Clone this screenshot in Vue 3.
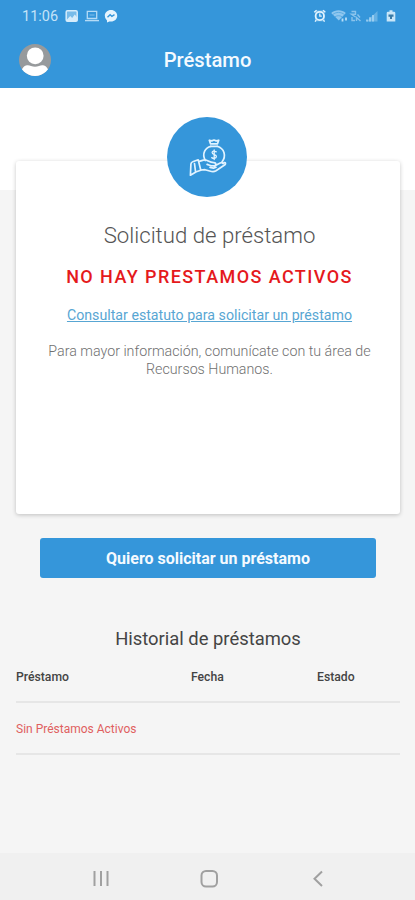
<script setup>
const columns = ['Préstamo', 'Fecha', 'Estado']
</script>

<template>
  <div class="screen">
    <header class="top">
      <div class="status">
        <span class="time">11:06</span>
        <svg class="status-left" width="56" height="14" viewBox="0 0 56 14">
          <rect x="1.200" y="1.700" width="11" height="10.600" rx="1.300" fill="#78bbe9" stroke="#d6ecfb" stroke-width="1.500" />
          <path d="M2 10.500 5.200 7l2 2 2.600-3.600 2.400 3V12H2z" fill="#d6ecfb" />
          <path d="M22.300 2.300h9.400v7.200h-9.400z" fill="none" stroke="#b4dbf6" stroke-width="1.300" />
          <path d="M24.500 6h5" stroke="#83bfeb" />
          <path d="M20 11.600h14" stroke="#b4dbf6" stroke-width="1.400" />
          <path d="M46 1c3.500 0 6.200 2.500 6.200 5.800S49.500 12.600 46 12.600l-1.700-.2-2.300 1v-2A5.600 5.600 0 0 1 39.800 6.800C39.800 3.500 42.500 1 46 1z" fill="#e6f4fe" />
          <path d="m42.500 8.300 2.600-2.500 1.800 1.500 2.600-1.600" fill="none" stroke="#3596da" stroke-width="1.400" />
        </svg>
        <svg class="status-right" width="86" height="14" viewBox="0 0 86 14">
          <path d="M2 1.500h9.600v10.800H2z" fill="#8fc9f0" opacity=".7" />
          <circle cx="6.800" cy="7" r="4.200" fill="#3596da" stroke="#e2f3fe" stroke-width="1.800" />
          <path d="M6.800 4.500V7.200h2M1.200 3.300 3.600 1.300M12.400 3.300 10 1.300M3.200 11.200 2 12.700M10.400 11.200l1.200 1.500" fill="none" stroke="#e2f3fe" stroke-width="1.300" />
          <path d="M18.200 3.900C22 .4 29 .4 32.800 3.900L25.800 11.500z" fill="#8fc7ef" />
          <path d="M19.800 5.500c3.300-2.800 8.200-2.800 11.500 0M22 7.800c2-1.500 5-1.500 7 0" fill="none" stroke="#4fa5df" stroke-width=".8" />
          <path d="M29.500 12.500v-3M33 11.500v-3" stroke="#b9def7" stroke-width="1.800" />
          <path d="M38.500 2.500h4v2.800h-4l4 2.700M39 8v3.500h3M44.500 5.500l2.500 3M43.500 12V8.500l4 3.500" fill="none" stroke="#8ac3ec" stroke-width="1.400" />
          <path d="M53.500 12.500 64.500 2v10.500z" fill="#67b1e4" />
          <path d="M54 12.500v-2M57 12.500V8.200M60 12.500V6" stroke="#acd7f5" stroke-width="1.500" />
          <path d="M75 2.700h1.500V1.200h3v1.500H81a1.300 1.300 0 0 1 1.300 1.300v8.500h-8.600V4A1.300 1.300 0 0 1 75 2.700z" fill="#c9e6f8" />
          <path d="M75.500 5.500h5v2.200h-1.500V10h-2V7.700h-1.500z" fill="#397aa6" />
        </svg>
      </div>
      <div class="toolbar">
        <svg class="avatar" width="34" height="34" viewBox="0 0 34 34">
          <defs><clipPath id="face"><circle cx="17" cy="17" r="16" /></clipPath></defs>
          <circle cx="17" cy="17" r="16" fill="#979a9c" />
          <g clip-path="url(#face)" fill="#fff">
            <circle cx="17.200" cy="12.800" r="8.400" />
            <path d="M3.500 27.500C6 21.500 10 21.700 13 23q4 1.300 8 0c3-1.300 7-1.500 9.500 4.500L25 34H9z" />
          </g>
        </svg>
        <h1>Préstamo</h1>
      </div>
    </header>

    <main class="content">
      <section class="card">
        <div class="badge">
          <svg width="80" height="80" viewBox="0 0 80 80" fill="none" stroke="#e1f3ff" stroke-width="1.700" stroke-linecap="round" stroke-linejoin="round">
            <path d="M43.500 26.800 42.300 23.200l2.500.7 2.200-.9 2.200.9 2.500-.7-1.200 3.600zM43.800 29.300h6.400" />
            <path d="M38.300 43.500C34.500 36.500 38.500 30.500 43.800 29.300M50.200 29.300C57.500 31.500 59.500 39 55 45" />
            <path d="M49.300 34.800q-4-1.800-4.200.8c0 2.500 4.500 1.500 4.300 4-.3 2.300-3.300 2-4.700 1M47.200 33v9.500" stroke-width="1.300" />
            <path d="m23.400 58.200.5-11q.2-2 1.800-2.500l5.500-1.900 2.600 10.400-4.500 1.500zM27.500 46.500l1 8" />
            <path d="M31.700 44.500c3-.3 4-2 7-1.500 2.500 1 4.800 2.600 8.200 2.700 2.700.2 2.300 3 .2 3.200-3.500.2-5-1-7-1.500M47 49.200l6.200-3.200q2-.8 2.800.5l1.500-.9c1.200-.3 1.300 1.500.4 2.200L49 53.800q-2 1.200-4.500.7l-6.500-1.800-4.300.3M43 50.300l3.500.8 2.500-.8" />
          </svg>
        </div>
        <h2>Solicitud de préstamo</h2>
        <p class="alert">NO HAY PRESTAMOS ACTIVOS</p>
        <a class="link">Consultar estatuto para solicitar un préstamo</a>
        <p class="info">Para mayor información, comunícate con tu área de<br>Recursos Humanos.</p>
      </section>

      <button class="cta" type="button">Quiero solicitar un préstamo</button>

      <section class="history">
        <h3>Historial de préstamos</h3>
        <div class="row head">
          <span v-for="c in columns" :key="c">{{ c }}</span>
        </div>
        <div class="row empty">Sin Préstamos Activos</div>
      </section>
    </main>

    <nav class="navbar">
      <svg width="415" height="47" viewBox="0 0 415 47" fill="none" stroke="#a0a0a0" stroke-width="2">
        <path d="M94.500 18v15M101 18v15M107.500 18v15" />
        <rect x="201.500" y="18" width="15.500" height="15.500" rx="4.500" />
        <path d="m322 18.500-7.500 7.300 7.500 7.200" />
      </svg>
    </nav>
  </div>
</template>

<style>
body {
  margin: 0;
  background: #f5f5f5;
}
</style>

<style scoped>
.screen {
  display: flex;
  flex-direction: column;
  height: 900px;
  overflow: hidden;
  font-family: Roboto, "Liberation Sans", sans-serif;
  background: #f5f5f5;
}
h1, h2, h3, p {
  margin: 0;
}
.top {
  height: 88px;
  background: #3596da;
  flex: none;
}
.status {
  display: flex;
  align-items: center;
  height: 32px;
  padding: 0 16px 0 22px;
}
.time {
  width: 43px;
  padding-top: 2px;
  font-size: 14.500px;
  line-height: 30px;
  color: #c4e3f8;
}
.status-right {
  margin-left: auto;
}
.toolbar {
  display: grid;
  grid-template-columns: 34px 1fr 34px;
  align-items: center;
  height: 56px;
  padding: 0 18px;
}
h1 {
  text-align: center;
  font-size: 20.200px;
  font-weight: 500;
  line-height: 28px;
  color: #f4faff;
}
.content {
  flex: 1;
  padding: 73px 15px 0 16px;
  background: linear-gradient(#fff 102px, #f5f5f5 102px);
}
.card {
  box-sizing: border-box;
  display: flex;
  flex-direction: column;
  align-items: center;
  height: 353px;
  padding-left: 3px;
  background: #fff;
  border-radius: 3px;
  box-shadow: 0 1px 4px rgba(0, 0, 0, .22);
  text-align: center;
}
.badge {
  width: 80px;
  height: 80px;
  margin: -44px 5px 0 0;
  border-radius: 50%;
  background: #3596da;
  flex: none;
}
.badge svg {
  display: block;
}
h2 {
  margin-top: 23px;
  font-size: 22.200px;
  font-weight: 300;
  line-height: 30px;
  color: #555;
}
.alert {
  margin-top: 15px;
  font-size: 18px;
  font-weight: 500;
  line-height: 24px;
  letter-spacing: 1.420px;
  color: #e5191c;
}
.link {
  margin-top: 16px;
  font-size: 14.200px;
  line-height: 20px;
  color: #58a6d3;
  text-decoration: underline;
}
.info {
  margin-top: 17px;
  font-size: 14.250px;
  font-weight: 300;
  line-height: 18px;
  color: #707070;
}
.cta {
  display: block;
  width: 336px;
  height: 40px;
  margin: 24px auto 0;
  padding: 1px 0 0;
  border: 0;
  border-radius: 3px;
  background: #3596da;
  color: #f4faff;
  font: 700 16px/39px Roboto, "Liberation Sans", sans-serif;
}
.history {
  padding-top: 48px;
}
h3 {
  text-align: center;
  font-size: 18.400px;
  font-weight: 400;
  line-height: 26px;
  color: #444;
}
.row {
  border-bottom: 2px solid #e6e6e6;
  font-size: 12px;
}
.head {
  display: grid;
  grid-template-columns: 175px 126px 1fr;
  height: 49px;
  font-size: 12.200px;
  line-height: 51px;
  font-weight: 500;
  color: #444;
}
.empty {
  height: 50px;
  line-height: 53px;
  color: #e06060;
}
.navbar {
  height: 47px;
  background: #f0f0f0;
  flex: none;
}
.navbar svg {
  display: block;
}
</style>
